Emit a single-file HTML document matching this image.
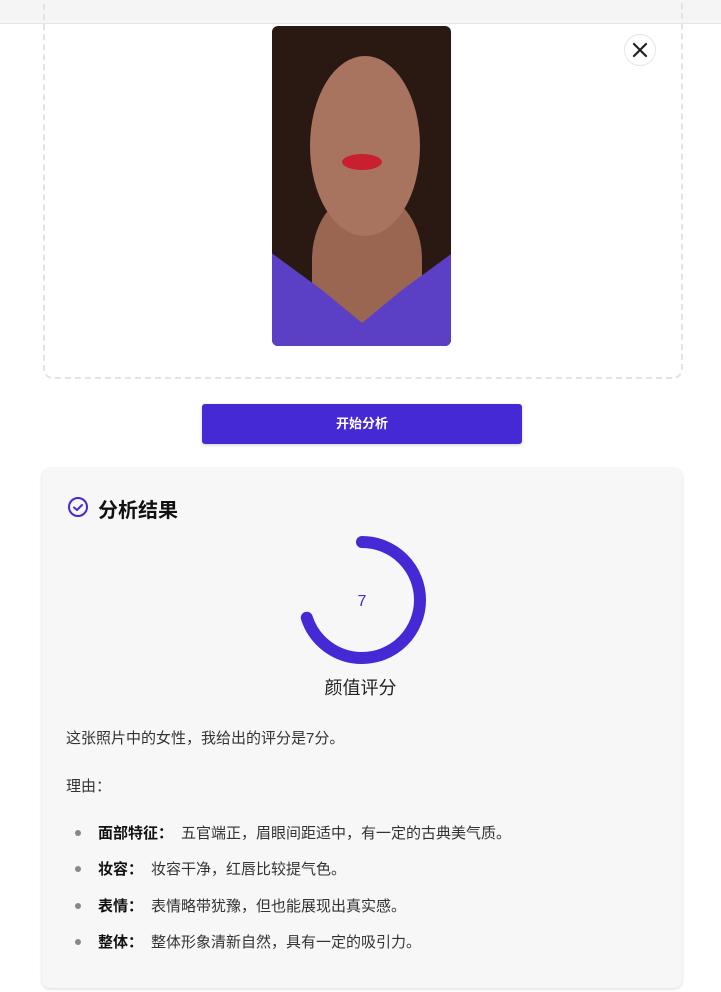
<!DOCTYPE html>
<html><head><meta charset="utf-8"><style>
body{margin:0;width:721px;height:992px;background:#fff;font-family:"Liberation Sans","Noto Sans CJK SC",sans-serif;position:relative;overflow:hidden}
.top{position:absolute;left:0;top:0;width:721px;height:23px;background:#f5f5f5;border-bottom:1px solid #e6e6e6}
.drop{position:absolute;left:43px;top:-10px;width:636px;height:387px;border:2px dashed #e3e3e3;border-top:none;border-radius:0 0 10px 10px}
.img{position:absolute;left:272px;top:26px;width:179px;height:320px;border-radius:6px;overflow:hidden;background:#2a1813}
.x{position:absolute;left:624px;top:34px;width:30px;height:30px;border-radius:50%;border:1px solid #e5e5e5;background:#fff}
.btn{position:absolute;left:202px;top:404px;width:320px;height:40px;background:#4429d4;border-radius:3px;color:#fff;font-size:13px;font-weight:bold;text-align:center;line-height:40px;box-shadow:0 1px 3px rgba(0,0,0,.2)}
.card{position:absolute;left:42px;top:468px;width:640px;height:520px;background:#f7f7f7;border-radius:8px;box-shadow:0 1px 3px rgba(0,0,0,.15)}
.t{position:absolute;left:98px;top:494px;font-size:20px;font-weight:bold;color:#111}
.p{position:absolute;left:66px;font-size:15px;color:#333}
.li{position:absolute;left:98px;font-size:15px;color:#333}
.li b{color:#111;margin-right:8px}
.li:before{content:"";position:absolute;left:-23px;top:8px;width:6px;height:6px;border-radius:50%;background:#888}
</style></head><body>
<div class="top"></div>
<div class="drop"></div>
<div class="img">
<div style="position:absolute;left:40px;top:170px;width:110px;height:160px;background:#9a6652;border-radius:40%"></div>
<div style="position:absolute;left:38px;top:30px;width:110px;height:180px;background:#a87460;border-radius:50%"></div>
<div style="position:absolute;left:-10px;top:220px;width:200px;height:110px;background:#5b3fc4;clip-path:polygon(0 0,30% 40%,50% 70%,70% 40%,100% 0,100% 100%,0 100%)"></div>
<div style="position:absolute;left:70px;top:128px;width:40px;height:16px;background:#c8202e;border-radius:50%"></div>
</div>
<div class="x"><svg width="30" height="30"><path d="M9 9L21 21M21 9L9 21" stroke="#222" stroke-width="2.2" stroke-linecap="round"/></svg></div>
<div class="btn">开始分析</div>
<div class="card"></div>
<svg style="position:absolute;left:67px;top:496px" width="22" height="22"><circle cx="11" cy="11" r="9" fill="none" stroke="#4429d4" stroke-width="2"/><path d="M7 11.5l3 2.5 5-5" fill="none" stroke="#4429d4" stroke-width="2" stroke-linecap="round" stroke-linejoin="round"/></svg>
<div class="t">分析结果</div>
<svg style="position:absolute;left:292px;top:530px" width="140" height="140"><circle cx="70" cy="70" r="58" fill="none" stroke="#4429d4" stroke-width="12" stroke-linecap="round" stroke-dasharray="255 400" transform="rotate(-90 70 70)"/><text x="70" y="76" text-anchor="middle" font-size="16" fill="#4429d4" font-family="Liberation Sans">7</text></svg>
<div style="position:absolute;left:0;width:721px;top:674px;text-align:center;font-size:18px;color:#222">颜值评分</div>
<div class="p" style="top:727px">这张照片中的女性，我给出的评分是7分。</div>
<div class="p" style="top:775px">理由：</div>
<div class="li" style="top:822px"><b>面部特征：</b>五官端正，眉眼间距适中，有一定的古典美气质。</div>
<div class="li" style="top:858px"><b>妆容：</b>妆容干净，红唇比较提气色。</div>
<div class="li" style="top:895px"><b>表情：</b>表情略带犹豫，但也能展现出真实感。</div>
<div class="li" style="top:931px"><b>整体：</b>整体形象清新自然，具有一定的吸引力。</div>
</body></html>
